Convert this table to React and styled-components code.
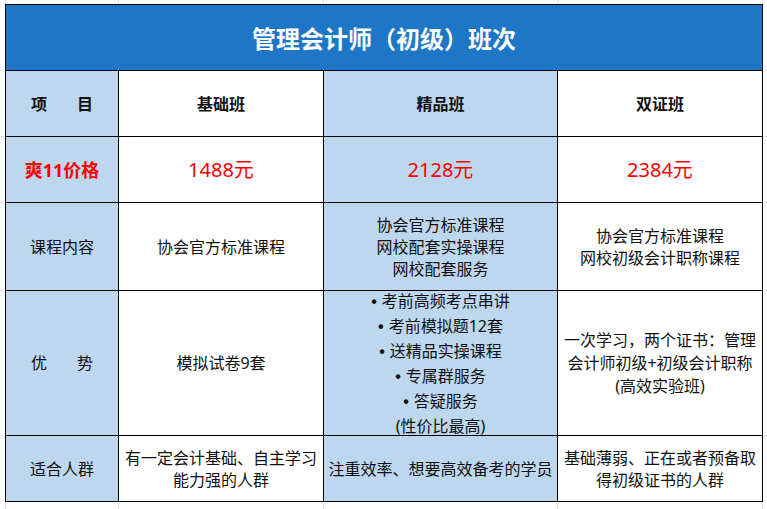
import React from "react";
import styled, { createGlobalStyle } from "styled-components";

const GlobalStyle = createGlobalStyle`
  html, body { margin: 0; padding: 0; background: #fff; }
  body { font-family: "Noto Sans", "Noto Sans CJK SC", sans-serif; }
`;

const GRID = "#dbe0ec";

const Sheet = styled.div`
  width: 767px;
  height: 509px;
  box-sizing: border-box;
  padding: 4px 0 0 5px;
  background-color: #fff;
  background-image:
    linear-gradient(to right, transparent 5px, ${GRID} 5px, ${GRID} 6px, transparent 6px),
    linear-gradient(to right, transparent 118px, ${GRID} 118px, ${GRID} 119px, transparent 119px),
    linear-gradient(to right, transparent 323px, ${GRID} 323px, ${GRID} 324px, transparent 324px),
    linear-gradient(to right, transparent 557px, ${GRID} 557px, ${GRID} 558px, transparent 558px),
    linear-gradient(to right, transparent 762px, ${GRID} 762px, ${GRID} 763px, transparent 763px),
    linear-gradient(to bottom, transparent 70px, ${GRID} 70px, ${GRID} 71px, transparent 71px),
    linear-gradient(to bottom, transparent 136px, ${GRID} 136px, ${GRID} 137px, transparent 137px),
    linear-gradient(to bottom, transparent 202px, ${GRID} 202px, ${GRID} 203px, transparent 203px),
    linear-gradient(to bottom, transparent 290px, ${GRID} 290px, ${GRID} 291px, transparent 291px),
    linear-gradient(to bottom, transparent 435px, ${GRID} 435px, ${GRID} 436px, transparent 436px);
`;

const Table = styled.div`
  display: grid;
  grid-template-columns: 112px 204px 233px 204px;
  grid-template-rows: 65px 65px 65px 87px 144px 65px;
  gap: 1px;
  padding: 1px;
  width: max-content;
  background: #000;
`;

const Title = styled.div`
  grid-column: 1 / -1;
  background: #1e76c6;
  color: #fff;
  font-size: 24px;
  font-weight: 700;
  display: flex;
  align-items: center;
  justify-content: center;
`;

const Cell = styled.div`
  background: ${(p) => (p.$blue ? "#bdd7ee" : "#ffffff")};
  display: flex;
  flex-direction: column;
  align-items: center;
  justify-content: center;
  text-align: center;
  color: ${(p) => (p.$red ? "#ff0000" : "#111")};
  font-size: ${(p) => p.$size || 16}px;
  font-weight: ${(p) => (p.$bold ? 700 : 400)};
  line-height: ${(p) => p.$lh || 22}px;
  padding: 0 4px;
  box-sizing: border-box;
`;

const Spread = styled.div`
  display: flex;
  gap: 30px;
`;

const Line = styled.div`
  white-space: nowrap;
`;

const Bullet = styled.span`
  font-family: "Liberation Sans", sans-serif;
  font-weight: 700;
  margin-right: 5px;
`;

export default function App() {
  return (
    <>
      <GlobalStyle />
      <Sheet>
        <Table>
          <Title>管理会计师（初级）班次</Title>

          <Cell $blue $bold>
            <Spread>
              <span>项</span>
              <span>目</span>
            </Spread>
          </Cell>
          <Cell $bold>基础班</Cell>
          <Cell $blue $bold>精品班</Cell>
          <Cell $bold>双证班</Cell>

          <Cell $blue $red $bold $size={18}>爽11价格</Cell>
          <Cell $red $size={20}>1488元</Cell>
          <Cell $blue $red $size={20}>2128元</Cell>
          <Cell $red $size={20}>2384元</Cell>

          <Cell $blue>课程内容</Cell>
          <Cell>协会官方标准课程</Cell>
          <Cell $blue>
            <Line>协会官方标准课程</Line>
            <Line>网校配套实操课程</Line>
            <Line>网校配套服务</Line>
          </Cell>
          <Cell>
            <Line>协会官方标准课程</Line>
            <Line>网校初级会计职称课程</Line>
          </Cell>

          <Cell $blue>
            <Spread>
              <span>优</span>
              <span>势</span>
            </Spread>
          </Cell>
          <Cell>模拟试卷9套</Cell>
          <Cell $blue $lh={24}>
            <Line><Bullet>•</Bullet>考前高频考点串讲</Line>
            <Line><Bullet>•</Bullet>考前模拟题12套</Line>
            <Line><Bullet>•</Bullet>送精品实操课程</Line>
            <Line><Bullet>•</Bullet>专属群服务</Line>
            <Line><Bullet>•</Bullet>答疑服务</Line>
            <Line>(性价比最高)</Line>
          </Cell>
          <Cell $lh={23}>
            <Line>一次学习，两个证书：管理</Line>
            <Line>会计师初级+初级会计职称</Line>
            <Line>(高效实验班)</Line>
          </Cell>

          <Cell $blue>适合人群</Cell>
          <Cell>
            <Line>有一定会计基础、自主学习</Line>
            <Line>能力强的人群</Line>
          </Cell>
          <Cell $blue>注重效率、想要高效备考的学员</Cell>
          <Cell>
            <Line>基础薄弱、正在或者预备取</Line>
            <Line>得初级证书的人群</Line>
          </Cell>
        </Table>
      </Sheet>
    </>
  );
}
